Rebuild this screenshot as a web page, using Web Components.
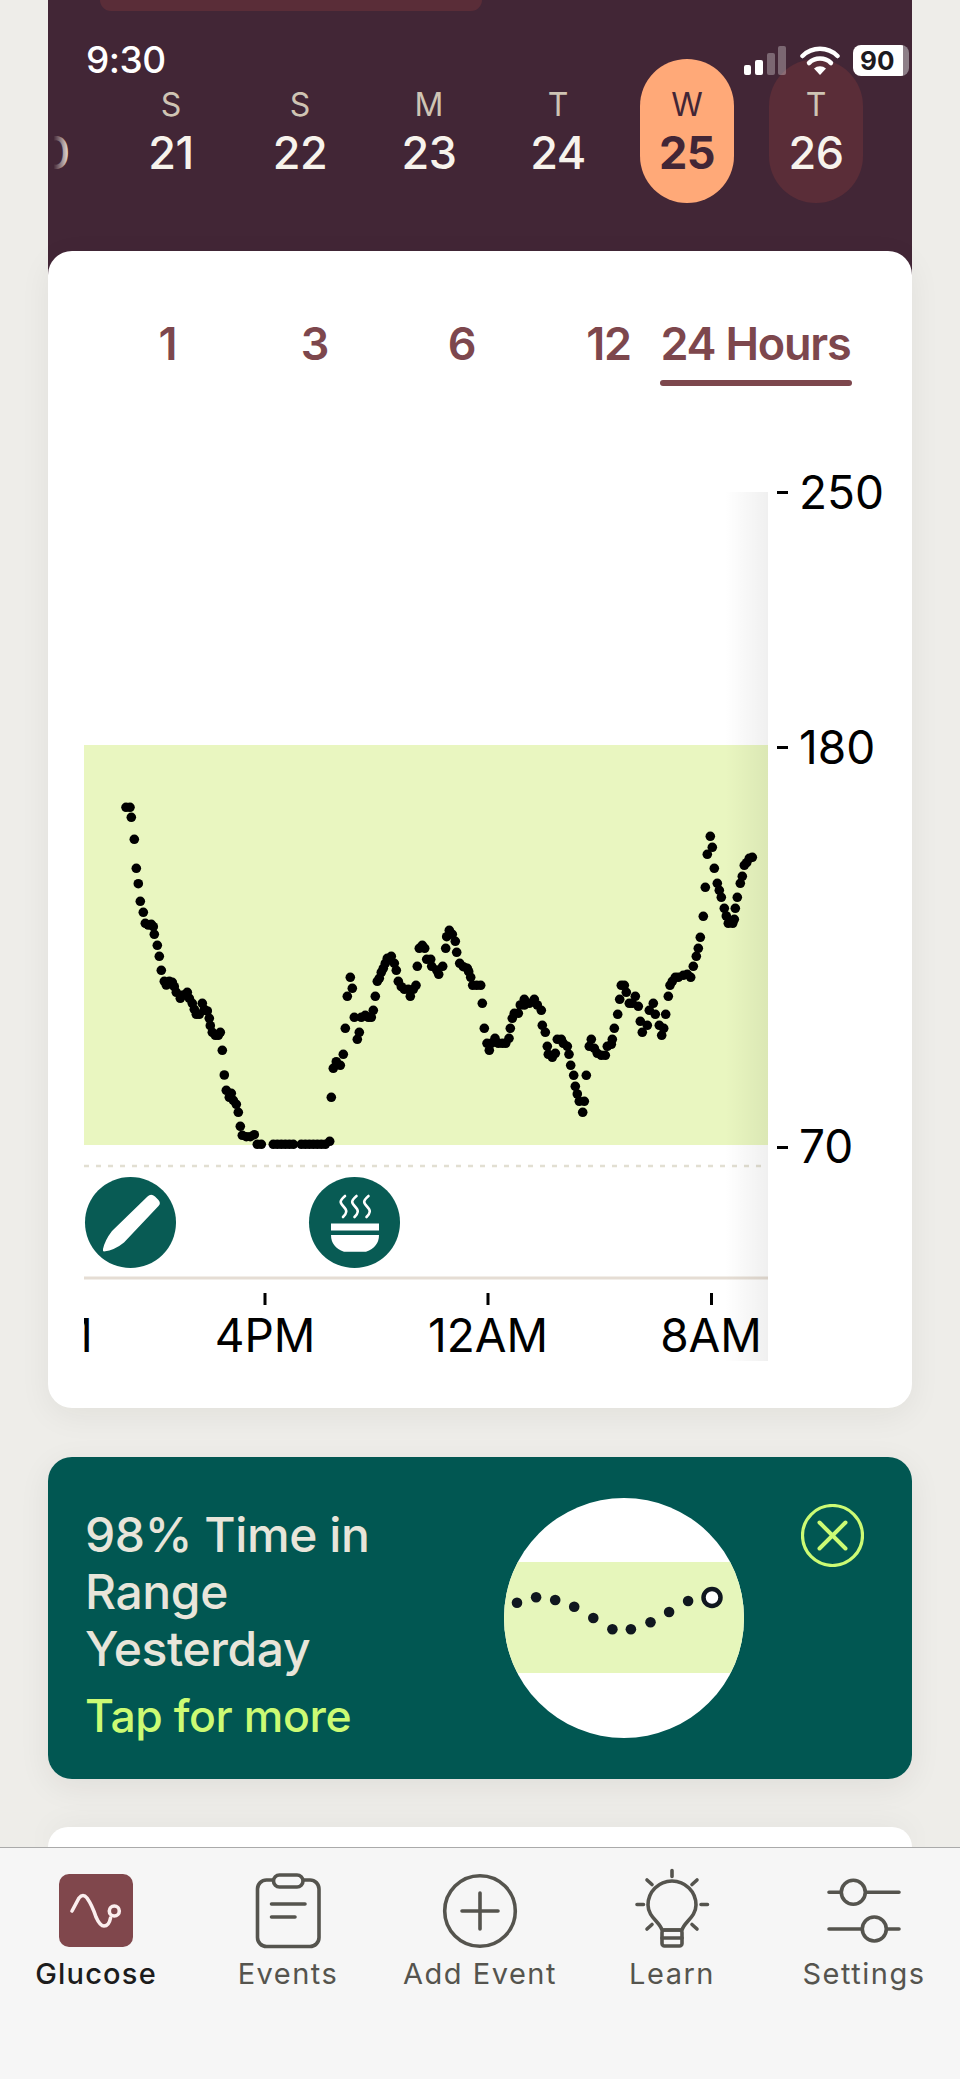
<!DOCTYPE html>
<html>
<head>
<meta charset="utf-8">
<title>Glucose</title>
<style>
    html, body {
        margin: 0;
        padding: 0;
        height: 2079px;
        overflow: hidden;
        background: #eeede9;
        font-family: Inter, "Liberation Sans", sans-serif;
    }
    tab-item svg {
        display: block;
        width: 100%;
        height: 100%;
        overflow: visible;
    }
</style>
</head>
<body>
<glucose-header></glucose-header>
<graph-card></graph-card>
<tir-banner></tir-banner>
<next-card></next-card>
<tab-bar>
    <tab-item active>
        <svg slot="icon" viewBox="59 1874 74 74">
            <rect x="59" y="1874" width="74" height="73" rx="10" fill="#80474c"/>
            <path d="M72 1911 L79 1898 Q83 1893 87 1898 Q92 1905 96 1917 Q100 1926 104 1926 Q109 1926 110.5 1918" fill="none" stroke="#fbeeee" stroke-width="3.6" stroke-linecap="round"/>
            <circle cx="114.3" cy="1911" r="5" fill="none" stroke="#fbeeee" stroke-width="3.6"/>
        </svg>
        Glucose
    </tab-item>
    <tab-item>
        <svg slot="icon" viewBox="251 1874 74 74" fill="none" stroke="#55544e" stroke-width="3.6" stroke-linecap="round">
            <rect x="257.5" y="1880" width="61.5" height="66.5" rx="9"/>
            <rect x="273.5" y="1875" width="29.5" height="12" rx="6" fill="#f6f6f6"/>
            <path d="M271.5 1904 H305 M271.5 1917 H295"/>
        </svg>
        Events
    </tab-item>
    <tab-item>
        <svg slot="icon" viewBox="443 1874 74 74" fill="none" stroke="#55544e" stroke-width="3.6" stroke-linecap="round">
            <circle cx="480" cy="1911" r="35.3"/>
            <path d="M462 1911 H498 M480 1893 V1929"/>
        </svg>
        Add Event
    </tab-item>
    <tab-item>
        <svg slot="icon" viewBox="635 1874 74 74" fill="none" stroke="#55544e" stroke-width="3.6" stroke-linecap="round" stroke-linejoin="round">
            <path d="M662 1930 C660 1922 648 1917 648 1905 A24 24 0 0 1 696 1905 C696 1917 684 1922 682 1930 Z"/>
            <rect x="662" y="1930" width="20" height="16" rx="2.5"/>
            <path d="M662 1938 H682"/>
            <path d="M672 1870.5 V1876.5 M647 1880 L652 1884.5 M697 1880 L692 1884.5 M637 1904.5 H643.5 M701 1904.5 H707.5 M647 1929 L652 1924.5 M697 1929 L692 1924.5"/>
        </svg>
        Learn
    </tab-item>
    <tab-item>
        <svg slot="icon" viewBox="827 1874 74 74" fill="none" stroke="#55544e" stroke-width="3.6" stroke-linecap="round">
            <path d="M829 1892.3 H841 M866 1892.3 H899 M829 1929 H862 M887 1929 H899"/>
            <circle cx="853.3" cy="1892.3" r="12"/>
            <circle cx="874.3" cy="1929" r="12"/>
        </svg>
        Settings
    </tab-item>
</tab-bar>

<script>
const FONT = 'Inter, "Liberation Sans", sans-serif';

class DayCell extends HTMLElement {
    constructor() {
        super();
        const root = this.attachShadow({ mode: 'open' });
        root.innerHTML = `
            <style>
                :host {
                    display: flex;
                    flex-direction: column;
                    align-items: center;
                    box-sizing: border-box;
                    width: 94px;
                    height: 144px;
                    padding-top: 28px;
                    border-radius: 47px;
                    flex: none;
                    color: #f7f3ec;
                }
                :host([selected]) { background: #ffa978; color: #422636; }
                :host([next]) { background: #5a2d38; }
                .d { font-size: 32px; line-height: 36px; color: #cfc4b4; }
                :host([selected]) .d { color: #422636; }
                .n { font-size: 45px; line-height: 48px; margin-top: 6px; font-weight: 500; letter-spacing: -0.5px; }
                :host([selected]) .n { font-weight: 700; }
            </style>
            <span class="d">${this.getAttribute('day')}</span>
            <span class="n">${this.getAttribute('num')}</span>
        `;
    }
}

class StatusBar extends HTMLElement {
    constructor() {
        super();
        const root = this.attachShadow({ mode: 'open' });
        root.innerHTML = `
            <style>
                :host {
                    position: absolute;
                    left: 0;
                    top: 44px;
                    width: 861px;
                    height: 32px;
                    display: flex;
                    justify-content: space-between;
                    color: #fff;
                    z-index: 2;
                }
                .time { margin-left: 38px; font-size: 37px; line-height: 32px; font-weight: 500; letter-spacing: -0.5px; }
                .icons { display: flex; align-items: flex-end; }
                .batt {
                    box-sizing: border-box;
                    width: 56px;
                    height: 31px;
                    margin-left: 13px;
                    border-radius: 8px;
                    background: linear-gradient(90deg, #fff 50px, #8d7f88 50px);
                    color: #1d1a1f;
                    font-size: 26px;
                    font-weight: 700;
                    line-height: 31px;
                    padding-left: 7px;
                }
                svg { display: block; }
            </style>
            <span class="time">9:30</span>
            <span class="icons">
                <svg width="96" height="32" viewBox="744 44 96 32">
                    <rect x="744" y="65" width="7" height="10" rx="2" fill="#fff"/>
                    <rect x="755" y="60" width="8" height="15" rx="2" fill="#fff"/>
                    <rect x="767" y="53" width="8" height="22" rx="2" fill="#fff" opacity=".3"/>
                    <rect x="778" y="46" width="8" height="29" rx="2" fill="#fff" opacity=".3"/>
                    <path d="M802.5 56 A25 25 0 0 1 837.5 56" fill="none" stroke="#fff" stroke-width="4.5" stroke-linecap="round"/>
                    <path d="M809 63 A16 16 0 0 1 831 63" fill="none" stroke="#fff" stroke-width="4.5" stroke-linecap="round"/>
                    <path d="M814 68.5 A9 9 0 0 1 826 68.5 L820 75 Z" fill="#fff"/>
                </svg>
                <span class="batt">90</span>
            </span>
        `;
    }
}

class GlucoseHeader extends HTMLElement {
    constructor() {
        super();
        const root = this.attachShadow({ mode: 'open' });
        root.innerHTML = `
            <style>
                :host {
                    display: block;
                    position: relative;
                    box-sizing: border-box;
                    margin: 0 48px;
                    height: 300px;
                    background: #422636;
                    overflow: hidden;
                    font-family: ${FONT};
                }
                .tab {
                    width: 382px;
                    height: 11px;
                    margin-left: 52px;
                    border-radius: 0 0 16px 16px;
                    background: #5a2d38;
                }
                .strip {
                    display: flex;
                    gap: 35px;
                    margin: 48px 0 0 -53px;
                }
                .fade {
                    position: absolute;
                    left: 0;
                    top: 50px;
                    width: 22px;
                    height: 150px;
                    background: linear-gradient(90deg, #422636 25%, rgba(66,38,54,0));
                }
            </style>
            <status-bar></status-bar>
            <div class="tab"></div>
            <div class="strip">
                <day-cell day="F" num="20"></day-cell>
                <day-cell day="S" num="21"></day-cell>
                <day-cell day="S" num="22"></day-cell>
                <day-cell day="M" num="23"></day-cell>
                <day-cell day="T" num="24"></day-cell>
                <day-cell day="W" num="25" selected></day-cell>
                <day-cell day="T" num="26" next></day-cell>
            </div>
            <div class="fade"></div>
        `;
    }
}

class RangeTabs extends HTMLElement {
    constructor() {
        super();
        const root = this.attachShadow({ mode: 'open' });
        const items = ['1', '3', '6', '12', '24 Hours'];
        root.innerHTML = `
            <style>
                :host {
                    display: grid;
                    grid-template-columns: repeat(5, 147px);
                    padding-left: 46px;
                    color: #7d474d;
                    font-size: 45px;
                    font-weight: 600;
                    line-height: 52px;
                    letter-spacing: -1.2px;
                }
                div { display: flex; flex-direction: column; align-items: center; white-space: nowrap; }
                .on { width: 192px; justify-self: center; }
                .on::after {
                    content: "";
                    display: block;
                    align-self: stretch;
                    height: 6px;
                    margin-top: 10px;
                    border-radius: 3px;
                    background: #7d474d;
                }
            </style>
            ${items.map((t, i) => `<div class="${i === 4 ? 'on' : ''}">${t}</div>`).join('')}
        `;
    }
}

// [x, y] read off the reference, zoom crop coordinates (3x)
const LEFT_DOTS = [[198,142],[210,142],[214,172],[223,238],[229,325],[235,371],[241,424],[250,457],[256,490],[265,495],[274,493],[280,500],[283,523],[292,556],[298,589],[304,631],[313,664],[319,675],[328,664],[337,667],[343,680],[349,697],[361,715],[370,705],[382,697],[388,715],[397,730],[403,748],[409,763],[418,763],[427,730],[433,748],[442,753],[448,775],[451,797],[457,817],[466,826],[475,826],[481,817],[487,871],[493,945],[499,991],[514,1000],[508,1012],[520,1021],[529,1033],[535,1057],[541,1099],[547,1126],[559,1130],[571,1130],[583,1124],[592,1153],[604,1153],[640,1153],[652,1153],[664,1153],[676,1153],[688,1153],[700,1153],[724,1153],[736,1153],[748,1153],[760,1153],[772,1153],[784,1153],[796,1153],[809,1144],[814,1012],[820,925],[829,905],[841,916],[850,883],[856,805],[862,709],[871,652],[877,685],[883,772],[892,838],[898,817],[904,772],[916,766],[925,772],[934,772],[940,751],[946,709],[952,664],[958,655],[964,637],[970,625],[976,610],[982,595],[994,589],[1003,610],[1009,631],[1015,664],[1024,680],[1033,688],[1045,688],[1051,709],[1060,688],[1068,676],[1072,619],[1078,565],[1087,556],[1094,565],[1100,598],[1112,598],[1115,619],[1130,630],[1136,643],[1148,619]];
const RIGHT_DOTS = [[17,565],[20,530],[28,511],[37,523],[46,544],[50,577],[59,610],[70,620],[82,625],[86,635],[92,652],[98,676],[110,676],[122,676],[127,730],[133,805],[141,850],[148,871],[154,850],[165,835],[175,850],[187,850],[197,850],[207,835],[211,805],[217,775],[223,760],[235,760],[241,735],[253,718],[253,735],[268,730],[283,718],[292,735],[304,751],[307,796],[316,817],[322,859],[325,883],[337,892],[346,880],[352,838],[364,838],[370,850],[382,859],[387,883],[392,916],[401,946],[406,979],[412,1002],[418,1024],[433,1024],[428,1057],[439,946],[448,859],[454,838],[463,865],[472,880],[484,886],[496,886],[502,859],[514,853],[517,838],[523,805],[533,763],[539,718],[544,676],[553,676],[559,697],[568,730],[577,730],[586,709],[595,739],[601,784],[607,817],[622,796],[628,751],[640,730],[646,763],[658,796],[665,826],[671,805],[677,763],[685,709],[690,676],[697,664],[706,652],[715,652],[730,646],[742,643],[752,652],[760,619],[769,589],[775,565],[781,532],[790,469],[796,382],[802,283],[811,229],[817,262],[823,325],[832,370],[838,391],[844,412],[853,445],[859,468],[865,490],[878,490],[883,478],[886,445],[892,412],[901,370],[907,349],[913,316],[920,308],[928,295],[937,292]];

class GlucoseChart extends HTMLElement {
    constructor() {
        super();
        const root = this.attachShadow({ mode: 'open' });
        const left = LEFT_DOTS.map(([x, y]) => [60 + x / 3, 760 + y / 3]);
        const right = RIGHT_DOTS.map(([x, y]) => [440 + x / 3, 760 + y / 3]);
        const dots = left.concat(right)
            .map(([x, y]) => `<circle cx="${x.toFixed(1)}" cy="${y.toFixed(1)}" r="4.8"/>`).join('');
        const yLabels = [['250', 492], ['180', 747], ['70', 1146]];
        const xLabels = [['8AM', 42], ['4PM', 265], ['12AM', 488], ['8AM', 711]];
        root.innerHTML = `
            <style>
                :host {
                    display: block;
                    position: relative;
                    height: 1022px;
                    color: #000;
                    font-size: 46px;
                }
                svg { position: absolute; left: 0; top: 0; }
                .y { position: absolute; left: 751px; line-height: 52px; margin-top: -26px; }
                .xs { position: absolute; left: 36px; top: 923px; width: 684px; height: 52px; overflow: hidden; }
                .x { position: absolute; top: 0; line-height: 52px; transform: translateX(-50%); white-space: nowrap; }
            </style>
            <svg width="864" height="1022" viewBox="48 386 864 1022">
                <defs>
                    <linearGradient id="fade" x1="0" x2="1" y1="0" y2="0">
                        <stop offset="0" stop-color="#000" stop-opacity="0"/>
                        <stop offset="1" stop-color="#000" stop-opacity=".06"/>
                    </linearGradient>
                </defs>
                <rect x="84" y="745" width="684" height="400" fill="#e9f6c0"/>
                <path d="M84 1166 H765" stroke="#e2dfd2" stroke-width="2.5" stroke-dasharray="5 7"/>
                <rect x="84" y="1276.5" width="684" height="3" fill="#e5ddd4"/>
                <g fill="#000">
                    <rect x="263.5" y="1293" width="3" height="12"/>
                    <rect x="486.5" y="1293" width="3" height="12"/>
                    <rect x="710" y="1293" width="3" height="12"/>
                    <rect x="777" y="491" width="11" height="3"/>
                    <rect x="777" y="746" width="11" height="3"/>
                    <rect x="777" y="1146" width="11" height="3"/>
                </g>
                <g fill="#000">${dots}</g>
                <circle cx="130.5" cy="1222.5" r="45.5" fill="#085b54"/>
                <path d="M147.5 1196.5 Q151 1193 155 1196.5 L158 1199.5 Q161.5 1203 158.5 1206 L124 1242.5 Q115 1250 104 1251.5 Q102.5 1251.5 103 1249 Q105 1240 112 1231 Z" fill="#fff"/>
                <circle cx="354.5" cy="1222.5" r="45.5" fill="#085b54"/>
                <path d="M331 1223.5 H379 V1230.5 H331 Z M331 1235 H379 Q379 1247 366 1251.7 H344 Q331 1247 331 1235 Z" fill="#fff"/>
                <path d="M345 1196 C339 1201 340 1203 343.5 1206.5 C347.5 1210.5 347 1213 343 1217 M356.5 1196 C350.5 1201 351.5 1203 355 1206.5 C359 1210.5 358.5 1213 354.5 1217 M368.5 1196 C362.5 1201 363.5 1203 367 1206.5 C371 1210.5 370.5 1213 366.5 1217" fill="none" stroke="#fff" stroke-width="2.6" stroke-linecap="round"/>
                <rect x="725" y="492" width="43" height="869" fill="url(#fade)"/>
            </svg>
            ${yLabels.map(([t, y]) => `<span class="y" style="top:${y - 386}px">${t}</span>`).join('')}
            <div class="xs">
                ${xLabels.map(([t, x]) => `<span class="x" style="left:${x - 84}px">${t}</span>`).join('')}
            </div>
        `;
    }
}

class GraphCard extends HTMLElement {
    constructor() {
        super();
        const root = this.attachShadow({ mode: 'open' });
        root.innerHTML = `
            <style>
                :host {
                    display: block;
                    position: relative;
                    box-sizing: border-box;
                    margin: -49px 48px 0;
                    height: 1157px;
                    padding-top: 67px;
                    background: #fff;
                    border-radius: 24px;
                    box-shadow: 0 8px 32px rgba(40, 35, 25, .06);
                    overflow: hidden;
                    font-family: ${FONT};
                }
            </style>
            <range-tabs></range-tabs>
            <glucose-chart></glucose-chart>
        `;
    }
}

class TirBanner extends HTMLElement {
    constructor() {
        super();
        const root = this.attachShadow({ mode: 'open' });
        const pts = [[850,488],[884,472],[918,480],[952,500],[986,534],[1020,568],[1053,568],[1088,547],[1121,516],[1155,483]];
        const dots = pts.map(([x, y]) =>
            `<circle cx="${(40 + x / 1.782).toFixed(1)}" cy="${(1440 + y / 3).toFixed(1)}" r="5.3"/>`).join('');
        root.innerHTML = `
            <style>
                :host {
                    display: grid;
                    grid-template-columns: 419px 240px 63px;
                    column-gap: 0;
                    box-sizing: border-box;
                    margin: 49px 48px 0;
                    height: 322px;
                    padding: 41px 0 0 37px;
                    background: #015752;
                    border-radius: 24px;
                    box-shadow: 0 8px 32px rgba(40, 35, 25, .07);
                    font-family: ${FONT};
                }
                .txt { padding-top: 7.5px; color: #e8e5da; font-size: 48px; line-height: 57px; font-weight: 500; letter-spacing: -0.4px; white-space: nowrap; }
                .more { margin-top: 11px; color: #ccfb74; font-size: 44.5px; }
                svg { display: block; }
                .close { margin: 6px 0 0 57px; }
            </style>
            <div class="txt">
                98% Time in<br>Range<br>Yesterday
                <div class="more">Tap for more</div>
            </div>
            <svg width="240" height="240" viewBox="504 1498 240 240">
                <defs><clipPath id="c"><circle cx="624" cy="1618" r="120"/></clipPath></defs>
                <circle cx="624" cy="1618" r="120" fill="#fff"/>
                <rect x="504" y="1562" width="240" height="111" fill="#e6f6bb" clip-path="url(#c)"/>
                <g fill="#10171f">${dots}</g>
                <circle cx="712" cy="1597.5" r="8.5" fill="#fff" stroke="#10171f" stroke-width="4.5"/>
            </svg>
            <svg class="close" width="63" height="63" viewBox="0 0 63 63" fill="none" stroke="#ccfb74" stroke-linecap="round">
                <circle cx="31.5" cy="31.5" r="30" stroke-width="3.2"/>
                <path d="M18.5 18.5 L44.5 44.5 M44.5 18.5 L18.5 44.5" stroke-width="4"/>
            </svg>
        `;
    }
}

class NextCard extends HTMLElement {
    constructor() {
        super();
        const root = this.attachShadow({ mode: 'open' });
        root.innerHTML = `
            <style>
                :host {
                    display: block;
                    margin: 48px 48px 0;
                    height: 20px;
                    background: #fff;
                    border-radius: 24px 24px 0 0;
                    box-shadow: 0 0 32px rgba(40, 35, 25, .06);
                }
            </style>
        `;
    }
}

class TabBar extends HTMLElement {
    constructor() {
        super();
        const root = this.attachShadow({ mode: 'open' });
        root.innerHTML = `
            <style>
                :host {
                    display: grid;
                    position: relative;
                    grid-template-columns: repeat(5, 192px);
                    box-sizing: border-box;
                    height: 232px;
                    padding-top: 26px;
                    background: #f6f6f6;
                    border-top: 1px solid #aaaaaa;
                    font-family: ${FONT};
                }
            </style>
            <slot></slot>
        `;
    }
}

class TabItem extends HTMLElement {
    constructor() {
        super();
        const root = this.attachShadow({ mode: 'open' });
        root.innerHTML = `
            <style>
                :host {
                    display: flex;
                    flex-direction: column;
                    align-items: center;
                    color: #55544e;
                    font-size: 29px;
                    line-height: 34px;
                    letter-spacing: 1.5px;
                    white-space: nowrap;
                }
                :host([active]) { color: #1c1c1c; font-weight: 500; letter-spacing: 1.2px; }
                .icon { width: 74px; height: 74px; margin-bottom: 9px; }
            </style>
            <div class="icon"><slot name="icon"></slot></div>
            <slot></slot>
        `;
    }
}

window.customElements.define('day-cell', DayCell);
window.customElements.define('status-bar', StatusBar);
window.customElements.define('glucose-header', GlucoseHeader);
window.customElements.define('range-tabs', RangeTabs);
window.customElements.define('glucose-chart', GlucoseChart);
window.customElements.define('graph-card', GraphCard);
window.customElements.define('tir-banner', TirBanner);
window.customElements.define('next-card', NextCard);
window.customElements.define('tab-bar', TabBar);
window.customElements.define('tab-item', TabItem);
</script>
</body>
</html>
